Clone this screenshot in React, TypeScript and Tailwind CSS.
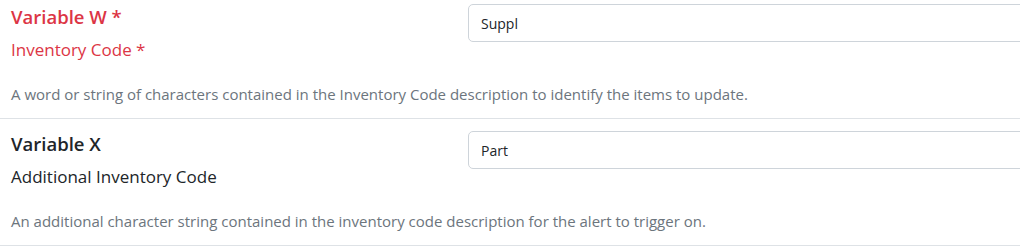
import React from "react";

const font = { fontFamily: '"Open Sans", "Noto Sans", sans-serif' };

function Row({
  title,
  label,
  value,
  desc,
  required,
}: {
  title: string;
  label: string;
  value: string;
  desc: string;
  required?: boolean;
}) {
  return (
    <div className="border-b border-[#dee2e6] pt-[12px] pb-[14px]">
      <div className="flex">
        <div className="w-[468px] shrink-0 pl-[11px]">
          <div
            className={`text-[18.5px] leading-[24px] font-semibold mt-[1px] ${
              required ? "text-[#dc3545]" : "text-[#212529]"
            }`}
          >
            {title}
            {required ? " *" : ""}
          </div>
          <div
            className={`text-[17px] leading-[24px] mt-[9px] ${
              required ? "text-[#dc3545]" : "text-[#212529]"
            }`}
          >
            {label}
            {required ? " *" : ""}
          </div>
        </div>
        <div className="flex-1">
          <input
            readOnly
            value={value}
            className="w-full h-[38px] rounded-[5px] border border-[#ced4da] bg-white px-[12px] text-[14px] text-[#212529] outline-none"
            style={font}
          />
        </div>
      </div>
      <div className="pl-[11px] mt-[22px] text-[15px] leading-[20px] text-[#6c757d]">
        {desc}
      </div>
    </div>
  );
}

export default function App() {
  return (
    <div className="w-[1020px] h-[250px] overflow-hidden bg-white" style={font}>
      <div className="w-[1060px] -mt-[8px]">
        <Row
          title="Variable W"
          label="Inventory Code"
          value="Suppl"
          desc="A word or string of characters contained in the Inventory Code description to identify the items to update."
          required
        />
        <Row
          title="Variable X"
          label="Additional Inventory Code"
          value="Part"
          desc="An additional character string contained in the inventory code description for the alert to trigger on."
        />
      </div>
    </div>
  );
}
